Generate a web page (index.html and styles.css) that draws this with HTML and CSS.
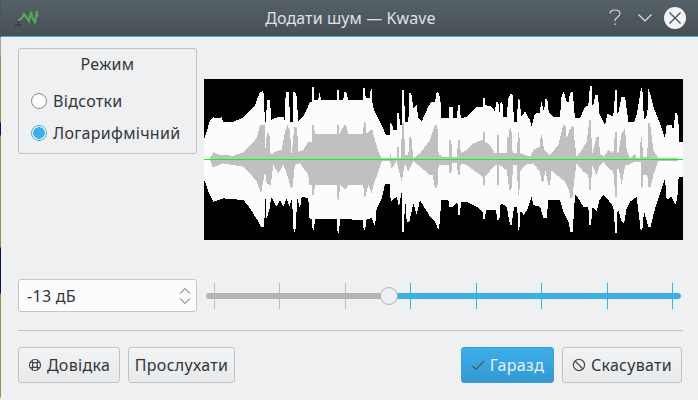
FILE: index.html
```html
<!DOCTYPE html>
<html lang="uk">
<head>
    <meta charset="UTF-8">
    <meta name="viewport" content="width=device-width, initial-scale=1.0">
    <title>Додати шум — Kwave</title>
    <link rel="stylesheet" href="styles.css">
</head>
<body>
    <div class="desktop-edge"></div>
    <div class="window">
        <header class="titlebar">
            <svg class="app-icon" width="24" height="20" viewBox="0 0 24 20">
                <path d="M0 17h6M2 14.500h3" stroke="#2c3033" stroke-width="1" fill="none"/>
                <path d="M3 12l3-1 3-5 3 4 2 3 2-9 2 7 2 3 2-11 0 6" stroke="#55a855" stroke-width="2.2" fill="none"/>
            </svg>
            <span class="title">Додати шум — Kwave</span>
            <div class="title-buttons">
                <svg class="help" width="12" height="17" viewBox="0 0 12 17" fill="none" stroke="#d5d8da" stroke-width="1.2"><path d="M1 4.500C1 2.500 3 1 6 1s5 1.500 5 3.700c0 3.300-5 3.300-5 7.300"/><path d="M6 14.200v1.800"/></svg>
                <svg class="chevron" width="14" height="8" viewBox="0 0 14 8"><path d="M.5.500L7 7 13.500.500" stroke="#e4e6e7" stroke-width="1.2" fill="none"/></svg>
                <span class="close">
                    <svg width="14" height="14" viewBox="0 0 14 14"><path d="M1.500 1.500l11 11M12.500 1.500l-11 11" stroke="#4b5358" stroke-width="1.400" fill="none"/></svg>
                </span>
            </div>
        </header>
        <main class="content">
            <div class="top-row">
                <fieldset class="mode-group">
                    <div class="group-title">Режим</div>
                    <label class="radio-row"><span class="radio"></span>Відсотки</label>
                    <label class="radio-row"><span class="radio radio-on"></span>Логарифмічний</label>
                </fieldset>
                <svg class="wave" width="479" height="161" viewBox="12 12 1437 483" shape-rendering="crispEdges">
                    <rect x="12" y="12" width="1437" height="483" fill="#000"/>
                    <polygon fill="#fcfcfc" points="12,195 20,170 30,135 40,127 60,130 65,127 70,140 100,140 130,128 150,105 165,90 178,55 190,45 195,140 199,140 200,75 210,75 214,135 235,125 250,125 255,140 257,50 267,50 270,140 279,140 280,50 289,55 295,140 310,125 322,100 330,80 336,80 337,35 341,35 342,75 355,75 357,55 361,55 362,75 410,75 411,45 416,45 417,75 430,75 433,50 438,50 445,75 488,75 490,40 495,40 497,70 510,70 512,42 516,42 518,95 530,120 545,150 558,180 570,180 571,145 577,150 580,165 590,165 592,115 597,115 600,150 606,150 607,45 612,45 615,140 625,140 628,55 634,55 640,100 650,90 655,130 665,140 685,95 695,80 705,80 710,50 718,55 720,80 723,80 724,130 747,130 748,95 758,95 760,130 772,130 773,90 780,90 782,130 800,125 830,95 848,95 850,70 854,70 856,90 875,95 885,110 888,80 895,80 898,115 902,80 907,80 910,125 920,125 925,70 932,55 938,60 942,140 952,140 953,70 960,75 963,125 975,110 990,135 995,155 1003,120 1008,115 1020,115 1023,75 1032,110 1036,72 1042,72 1046,110 1060,125 1080,125 1085,60 1092,50 1098,75 1105,85 1110,55 1118,50 1125,130 1140,130 1152,100 1165,90 1170,32 1175,32 1178,100 1186,60 1194,60 1198,115 1215,150 1223,115 1237,125 1242,110 1245,45 1250,45 1253,125 1265,65 1275,65 1285,140 1303,140 1310,120 1323,40 1327,40 1332,135 1342,120 1345,42 1352,60 1360,95 1380,145 1395,190 1400,150 1415,150 1420,165 1426,115 1432,115 1436,150 1438,200 1449,200 1449,305 1436,305 1432,370 1426,390 1415,365 1400,375 1395,312 1385,340 1370,385 1360,420 1352,455 1345,455 1332,410 1327,465 1322,465 1310,365 1290,380 1280,400 1272,445 1265,440 1253,400 1250,475 1246,475 1240,395 1225,375 1210,360 1198,375 1190,410 1178,395 1173,450 1168,450 1165,395 1150,395 1135,370 1125,360 1118,472 1112,472 1105,440 1090,410 1080,375 1045,375 1040,430 1030,430 1020,395 1000,390 995,365 982,405 970,420 962,405 958,465 954,465 952,395 942,395 935,450 930,450 920,395 902,385 898,435 892,435 888,405 858,405 855,432 850,432 848,410 830,395 800,380 783,380 780,420 775,420 772,380 760,395 748,395 745,375 723,375 720,440 715,465 705,440 690,425 660,375 650,420 640,385 628,440 620,440 615,365 612,470 607,470 605,350 597,395 590,365 572,380 570,328 555,328 545,370 530,400 525,455 515,430 500,432 495,465 491,465 489,435 420,432 417,475 413,475 410,432 345,432 342,465 338,465 336,432 328,430 325,370 305,365 300,400 292,370 286,470 281,470 276,370 268,395 260,370 250,395 240,375 230,395 213,365 210,395 201,430 198,430 197,365 192,455 185,458 175,440 150,400 130,375 70,370 40,380 25,350 12,312"/>
                    <polygon fill="#c0c0c0" points="30,250 40,232 60,240 100,242 130,232 150,210 170,190 180,150 195,150 197,240 200,175 208,175 212,240 230,228 245,225 255,170 262,150 270,170 275,240 283,155 291,155 295,230 310,225 325,200 335,200 336,150 341,150 345,178 410,178 411,150 416,150 418,178 433,150 438,150 445,178 490,178 491,140 496,140 500,178 512,165 518,165 520,178 535,230 545,250 570,250 570,230 575,250 590,250 591,215 596,215 597,250 604,250 605,145 612,145 615,240 625,240 628,185 634,185 640,250 660,235 690,195 705,150 712,150 716,240 720,240 725,245 747,245 748,195 754,195 756,245 772,245 773,195 780,195 782,235 800,225 820,205 848,195 849,170 854,170 855,200 870,210 885,235 890,235 891,180 896,180 898,235 920,235 921,185 927,185 929,160 934,160 938,235 952,235 953,170 958,170 960,235 990,245 1000,225 1020,215 1022,180 1026,180 1032,225 1050,240 1075,210 1080,190 1085,170 1090,150 1096,150 1100,190 1108,165 1120,150 1124,200 1130,245 1145,225 1160,200 1168,135 1173,135 1176,240 1190,185 1196,185 1200,235 1212,245 1225,225 1240,235 1245,170 1250,170 1253,245 1265,175 1275,160 1280,225 1290,250 1305,235 1310,250 1320,250 1322,185 1326,185 1329,245 1342,245 1344,145 1350,145 1360,225 1375,250 1435,250 1435,258 1375,258 1360,300 1352,335 1345,335 1342,300 1330,300 1327,340 1323,340 1322,260 1305,260 1285,270 1276,270 1270,300 1265,330 1260,300 1253,270 1250,365 1246,365 1240,290 1225,280 1210,260 1198,275 1190,300 1176,270 1173,345 1168,345 1165,300 1150,290 1130,265 1122,320 1117,370 1112,370 1105,340 1095,320 1070,300 1055,285 1050,330 1045,330 1036,285 1030,320 1025,320 1020,290 1000,265 975,270 960,290 958,360 953,360 952,270 940,270 934,345 928,345 920,285 898,270 896,330 891,330 890,270 885,270 856,305 854,330 850,330 848,305 820,285 800,270 782,265 780,300 773,300 772,265 756,265 754,295 748,295 747,270 720,270 716,270 712,340 705,340 698,300 690,300 640,258 625,290 615,265 605,320 590,258 575,280 570,258 545,258 535,290 520,330 515,355 505,330 496,365 492,365 490,330 445,330 435,345 420,330 417,375 413,375 410,330 345,330 341,360 337,360 335,330 328,330 325,300 300,265 285,270 277,340 273,340 262,300 250,270 235,295 220,270 212,330 200,325 195,290 183,355 170,320 150,295 130,275 70,265 38,278 30,255"/>
                    <rect x="12" y="252" width="1437" height="3" fill="#00ff00"/>
                </svg>
            </div>
            <div class="level-row">
                <div class="spinbox">
                    <span>-13 дБ</span>
                    <svg width="12" height="18" viewBox="0 0 12 18"><path d="M1 6.500l5-5 5 5M1 11.500l5 5 5-5" stroke="#5a5f63" stroke-width="1" fill="none"/></svg>
                </div>
                <div class="slider">
                    <div class="ticks">
                        <i></i><i></i><i></i><i class="tick-on"></i><i class="tick-on"></i><i class="tick-on"></i><i class="tick-on"></i><i class="tick-on"></i>
                    </div>
                    <div class="track">
                        <div class="track-done"></div>
                        <div class="track-left"></div>
                    </div>
                    <div class="handle"></div>
                </div>
            </div>
            <hr class="separator">
            <div class="button-row">
                <button class="btn btn-help">
                    <svg width="14" height="14" viewBox="0 0 14 14" fill="none" stroke="#3f4448"><circle cx="7" cy="7" r="5.500" stroke-width="1.100"/><circle cx="7" cy="7" r="2.400" stroke-width=".9"/><path d="M4.500 1.800v10.400M9.500 1.800v10.400M1.800 4.500h10.400M1.800 9.500h10.400" stroke-width=".9"/></svg>
                    Довідка
                </button>
                <button class="btn btn-listen">Прослухати</button>
                <button class="btn btn-ok">
                    <svg width="14" height="14" viewBox="0 0 14 14" fill="none" stroke="#4d5a62" stroke-width="1.200"><path d="M1.500 8l3.500 3.500L13 3"/></svg>
                    Гаразд
                </button>
                <button class="btn btn-cancel">
                    <svg width="14" height="14" viewBox="0 0 14 14" fill="none" stroke="#4d4d4d" stroke-width="1.200"><circle cx="7" cy="7" r="5.600"/><path d="M3 3l8 8"/></svg>
                    Скасувати
                </button>
            </div>
        </main>
    </div>
</body>
</html>
```

FILE: styles.css
```css
* {
    box-sizing: border-box;
}

html, body {
    height: 100%;
}

body {
    margin: 0;
    display: flex;
    overflow: hidden;
    font-family: "Noto Sans", sans-serif;
    font-size: 16px;
    letter-spacing: 0.3px;
    color: #31363b;
    background-color: #eff0f1;
}

.desktop-edge {
    width: 1px;
    background: linear-gradient(#4d565c 0 36px, #a0a2a0 38px 56px, #8f8f4f 58px 122px, #101540 123px 135px, #8f8f4f 136px 247px, #101540 248px 293px, #8f8f4f 294px 397px, #eff0f1 398px);
}

.window {
    flex: 1;
    display: flex;
    flex-direction: column;
    min-width: 0;
}

.titlebar {
    height: 37px;
    display: grid;
    grid-template-columns: 1fr auto 1fr;
    align-items: center;
    padding: 0 12px 1px 14px;
    background: linear-gradient(#566068, #475055);
    border-bottom: 1px solid #3daee9;
}

.title {
    letter-spacing: 0.1px;
    color: #dfe2e3;
}

.title-buttons {
    display: flex;
    align-items: center;
    justify-content: flex-end;
    gap: 12px;
}

.help {
    margin-right: 5px;
}

.close {
    width: 22px;
    height: 22px;
    border-radius: 50%;
    background-color: #f2f3f4;
    display: flex;
    align-items: center;
    justify-content: center;
}

.content {
    flex: 1;
    padding: 11px 16px 0 17px;
    display: flex;
    flex-direction: column;
}

.top-row {
    display: flex;
    gap: 7px;
    align-items: flex-start;
}

.mode-group {
    flex: none;
    width: 179px;
    height: 106px;
    margin: 0;
    padding: 5px 0 0 12px;
    border: 1px solid #c0c2c4;
    border-radius: 3px;
}

.group-title {
    text-align: center;
    margin: 0 0 11px -12px;
    line-height: 20px;
}

.radio-row {
    display: flex;
    align-items: center;
    gap: 6px;
    height: 32px;
}

.radio {
    width: 16px;
    height: 16px;
    border-radius: 50%;
    border: 1px solid #8a8d90;
    background-color: #fcfcfc;
}

.radio-on {
    border-color: #3daee9;
    background: radial-gradient(circle, #3daee9 0 5.5px, #fcfcfc 6.2px);
}

.wave {
    display: block;
    flex: none;
    margin-top: 31px;
}

.level-row {
    display: flex;
    align-items: center;
    margin-top: 39px;
    gap: 9px;
}

.spinbox {
    width: 179px;
    height: 33px;
    display: flex;
    align-items: center;
    justify-content: space-between;
    padding: 0 5px 0 8px;
    background-color: #fcfcfc;
    border: 1px solid #c4c6c8;
    border-radius: 3px;
}

.slider {
    width: 475px;
    height: 26px;
    position: relative;
    display: flex;
    align-items: center;
}

.ticks {
    position: absolute;
    inset: 0 8px;
    display: flex;
    justify-content: space-between;
}

.ticks i {
    width: 1px;
    background-color: #bcbec0;
}

.ticks i.tick-on {
    background-color: #3daee9;
}

.track {
    position: relative;
    width: 100%;
    height: 6px;
    display: flex;
}

.track-done {
    width: 183px;
    background-color: #b4b5b6;
    border-radius: 3px 0 0 3px;
}

.track-left {
    flex: 1;
    background-color: #3daee9;
    border-radius: 0 3px 3px 0;
}

.handle {
    position: absolute;
    left: 174px;
    top: 4px;
    width: 18px;
    height: 18px;
    border-radius: 50%;
    border: 1px solid #b0b2b4;
    background-color: #eff0f1;
}

.separator {
    margin: 18px -1px 0 0;
    border: none;
    border-top: 1px solid #bfc1c3;
}

.button-row {
    display: flex;
    gap: 8px;
    margin-top: 16px;
}

.btn {
    height: 36px;
    display: flex;
    align-items: center;
    justify-content: center;
    gap: 5px;
    padding: 0;
    font-family: inherit;
    font-size: 16px;
    letter-spacing: 0.3px;
    color: #31363b;
    background: linear-gradient(#f2f3f4, #e8e9ea);
    border: 1px solid #c0c2c4;
    border-radius: 3px;
}

.btn-help {
    width: 102px;
}

.btn-listen {
    width: 107px;
}

.btn-ok {
    width: 93px;
    margin-left: auto;
    color: #e3f2fb;
    background: linear-gradient(#3daee9, #3498d4);
    border-color: #3a9fd8;
}

.btn-cancel {
    width: 120px;
}
```
